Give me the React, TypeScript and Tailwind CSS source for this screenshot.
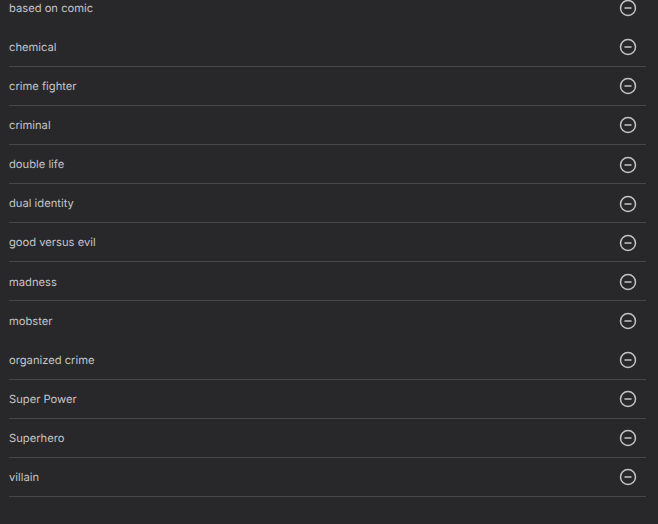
import { CircleMinus } from "lucide-react";

const tags = [
  "based on comic",
  "chemical",
  "crime fighter",
  "criminal",
  "double life",
  "dual identity",
  "good versus evil",
  "madness",
  "mobster",
  "organized crime",
  "Super Power",
  "Superhero",
  "villain",
];

export default function App() {
  return (
    <div className="h-[524px] w-[658px] overflow-hidden bg-[#28282a] pl-[9px] pr-3 font-['Inter',sans-serif] [text-rendering:geometricPrecision]">
      <ul className="-mt-[11.18px] flex flex-col">
        {tags.map((tag, i) => (
          <li
            key={tag}
            className={`flex h-[39.09px] shrink-0 items-center justify-between border-b pt-[0.2px] pr-[9.5px] ${
              i === 0 || i === 8 ? "border-transparent" : "border-[#47474a]"
            }`}
          >
            <span className="text-[11.2px] leading-4 text-[#c4c4c6]">{tag}</span>
            <CircleMinus className="mt-[0.5px] h-[18px] w-[18px] text-[#c4c4c6]" strokeWidth={2} />
          </li>
        ))}
      </ul>
    </div>
  );
}
